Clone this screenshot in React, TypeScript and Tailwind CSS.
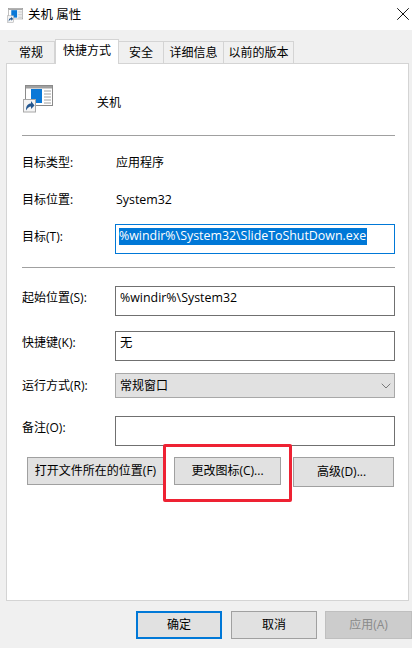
import { ChevronDown, X } from 'lucide-react';

const fontClass = "font-['Open_Sans','Noto_Sans_CJK_SC',sans-serif]";

function ShortcutIcon({ small }: { small?: boolean }) {
  return (
    <svg width={small ? 16 : 30} height={small ? 15 : 28} viewBox="0 0 30 28" className="block">
      <rect x="2.500" y="0.500" width="27" height="20" fill="#fff" stroke="#8a8a8a" />
      <rect x="3" y="1" width="26" height="2.500" fill="#a0a0a0" />
      <rect x="8" y="4" width="11" height="14" fill="#0a78d7" />
      <path d="M21 6h7M21 9h7M21 12h7M21 15h7M21 18h7" stroke="#a0a0a0" />
      <rect x="0.500" y="14.500" width="12" height="12.500" fill="#f4f4f4" stroke="#a8a8a8" />
      <path d="M3 25.500c0-5 2-7 5-7v-2.500l3.500 4.500-3.500 3.500v-2.500c-2 0-3 1-5 4z" fill="#23568f" />
    </svg>
  );
}

function Tab({ label, active, className }: { label: string; active?: boolean; className: string }) {
  return (
    <div
      className={
        active
          ? `relative z-10 -mb-px flex h-[25px] items-center justify-center border border-b-0 border-[#d4d4d4] bg-white pb-0.5 ${className}`
          : `flex h-[22px] items-center justify-center border border-b-0 border-l-0 border-[#d4d4d4] ${className}`
      }
    >
      {label}
    </div>
  );
}

function Field({ label, value, className }: { label: string; value?: string; className: string }) {
  return (
    <div className={`flex items-center ${className}`}>
      <div className="w-[93px] shrink-0 pb-[6px]">{label}</div>
      <div className="flex h-[30px] flex-1 items-center border border-[#707070] px-1 pb-[7px] text-[12.4px]">{value}</div>
    </div>
  );
}

function Btn({ label, tone = 'default', className }: { label: string; tone?: 'default' | 'focus' | 'disabled'; className: string }) {
  const toneClass =
    tone === 'focus'
      ? 'border-2 border-[#0078d7] bg-[#e1e1e1]'
      : tone === 'disabled'
        ? 'border border-[#bfbfbf] bg-[#cccccc] text-[#8a8a8a]'
        : 'border border-[#a0a0a0] bg-[#e1e1e1]';
  return <div className={`flex items-center justify-center ${toneClass} ${className}`}>{label}</div>;
}

export default function App() {
  return (
    <div className={`flex h-[648px] w-[412px] flex-col overflow-hidden bg-[#f0f0f0] text-[12px] leading-none text-black ${fontClass}`}>
      <div className="flex h-[30px] shrink-0 items-center bg-white pl-[7px]">
        <ShortcutIcon small />
        <span className="ml-[5px] text-[12.500px]">关机 属性</span>
        <X className="-mr-[2px] mb-[2px] ml-auto" size={22} strokeWidth={1} />
      </div>

      <div className="ml-2 mt-2.5 flex h-[23px] items-end">
        <Tab label="常规" className="w-[47px] border-l" />
        <Tab label="快捷方式" active className="w-[64px]" />
        <Tab label="安全" className="w-[45px]" />
        <Tab label="详细信息" className="w-[60px]" />
        <Tab label="以前的版本" className="w-[70px]" />
      </div>

      <div className="relative mx-[6px] flex h-[538px] w-[403px] flex-col border border-[#d4d4d4] bg-white pl-[15px] pr-[13px]">
        <div className="flex h-[71px] items-start pl-[1px] pt-[21px]">
          <ShortcutIcon />
          <span className="ml-[44px] mt-[12px]">关机</span>
        </div>
        <div className="h-px bg-[#a0a0a0]" />

        <div className="mt-[21px] flex items-center">
          <div className="w-[94px]">目标类型:</div>
          <div>应用程序</div>
        </div>
        <div className="mt-[25px] flex items-center">
          <div className="w-[94px]">目标位置:</div>
          <div className="text-[12.4px]">System32</div>
        </div>

        <div className="mt-[18px] flex items-center">
          <div className="w-[93px] shrink-0 pb-1">目标(T):</div>
          <div className="flex h-[30px] flex-1 items-center border border-[#0078d7] px-[3px] text-[12.4px]">
            <span className="mb-[6px] bg-[#0078d7] py-[2px] pr-px text-white">%windir%\System32\SlideToShutDown.exe</span>
          </div>
        </div>

        <div className="mt-[13px] h-px bg-[#a0a0a0]" />

        <Field label="起始位置(S):" value="%windir%\System32" className="mt-[18px]" />
        <Field label="快捷键(K):" value="无" className="mt-[15px]" />

        <div className="mt-3 flex items-center">
          <div className="w-[93px] shrink-0">运行方式(R):</div>
          <div className="flex h-[25px] flex-1 items-center justify-between border border-[#a8a8a8] bg-[#e1e1e1] pl-1">
            常规窗口
            <ChevronDown size={16} strokeWidth={1} color="#444" />
          </div>
        </div>

        <Field label="备注(O):" className="mt-[18px]" />

        <div className="ml-[5px] mt-[11px] flex items-start">
          <Btn label="打开文件所在的位置(F)" className="h-[28px] w-[137px]" />
          <Btn label="更改图标(C)..." className="ml-[10px] h-[28px] w-[107px]" />
          <Btn label="高级(D)..." className="ml-[12px] h-[30px] w-[101px] pr-1" />
        </div>

        {/* 红框标注 */}
        <div className="absolute left-[156px] top-[380px] h-[58px] w-[129px] rounded-[2px] border-[3px] border-[#ee2233]" />
      </div>

      <div className="mt-[10px] flex pl-[136px]">
        <Btn label="确定" tone="focus" className="h-[28px] w-[86px]" />
        <Btn label="取消" className="ml-[9px] h-[28px] w-[86px]" />
        <Btn label="应用(A)" tone="disabled" className="ml-2 h-[28px] w-[87px]" />
      </div>
    </div>
  );
}
